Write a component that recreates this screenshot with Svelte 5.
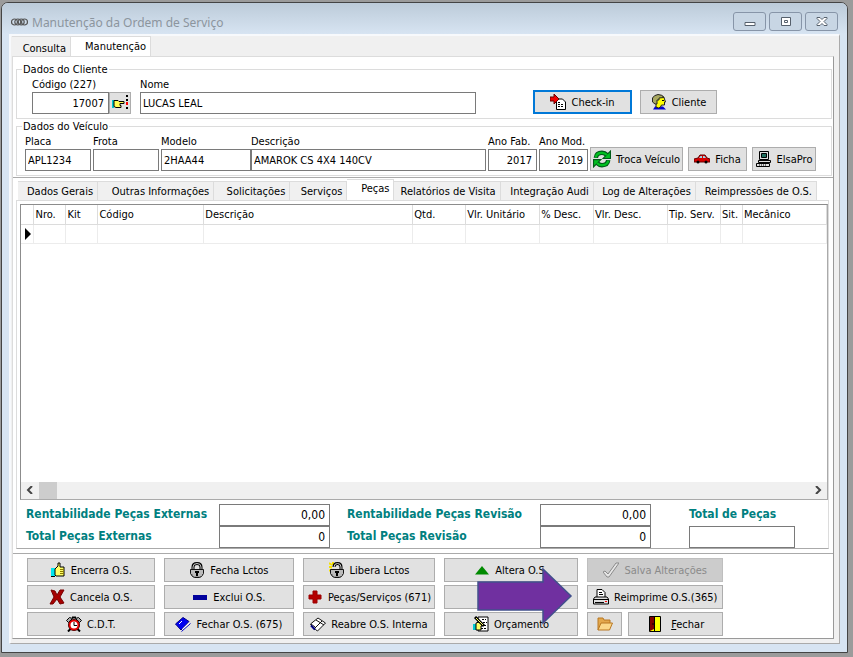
<script lang="ts">
	type Action = { label: string; icon: string; disabled?: boolean };

	const mainTabs = ["Consulta", "Manutenção"];
	const detailTabs = [
		{ label: "Dados Gerais", size: 80 },
		{ label: "Outras Informações", size: 116 },
		{ label: "Solicitações", size: 76 },
		{ label: "Serviços", size: 57 },
		{ label: "Peças", size: 47 },
		{ label: "Relatórios de Visita", size: 106 },
		{ label: "Integração Audi", size: 93 },
		{ label: "Log de Alterações", size: 102 },
		{ label: "Reimpressões de O.S.", size: 121 },
	];

	const columns = [
		{ label: "", size: 13 },
		{ label: "Nro.", size: 32 },
		{ label: "Kit", size: 32 },
		{ label: "Código", size: 106 },
		{ label: "Descrição", size: 209 },
		{ label: "Qtd.", size: 53 },
		{ label: "Vlr. Unitário", size: 74 },
		{ label: "% Desc.", size: 54 },
		{ label: "Vlr. Desc.", size: 74 },
		{ label: "Tip. Serv.", size: 53 },
		{ label: "Sit.", size: 22 },
		{ label: "Mecânico", size: 84 },
	];
	const columnsTotal = columns.reduce((sum, c) => sum + c.size, 0);

	const actions: Action[] = [
		{ label: "Encerra O.S.", icon: "thumb" },
		{ label: "Fecha Lctos", icon: "lock" },
		{ label: "Libera Lctos", icon: "unlock" },
		{ label: "Altera O.S.", icon: "triangle" },
		{ label: "Salva Alterações", icon: "check", disabled: true },
		{ label: "Cancela O.S.", icon: "cross" },
		{ label: "Exclui O.S.", icon: "minus" },
		{ label: "Peças/Serviços (671)", icon: "plus" },
		{ label: "", icon: "" },
		{ label: "Reimprime O.S.(365)", icon: "printer" },
		{ label: "C.D.T.", icon: "clock" },
		{ label: "Fechar O.S. (675)", icon: "book" },
		{ label: "Reabre O.S. Interna", icon: "openbook" },
		{ label: "Orçamento", icon: "notes" },
	];

	let mainTab = $state("Manutenção");
	let detailTab = $state("Peças");
	let codigo = $state("17007");
	let nome = $state("LUCAS LEAL");
	let placa = $state("APL1234");
	let frota = $state("");
	let modelo = $state("2HAA44");
	let descricao = $state("AMAROK CS 4X4 140CV");
	let anoFab = $state("2017");
	let anoMod = $state("2019");
</script>

{#snippet icon(name: string)}
	<svg class="icon" viewBox="0 0 16 16" aria-hidden="true">
		{#if name === "thumb"}
			<path d="M1 6h4v8H1z" fill="#00e5ee" />
			<path d="M5 7l3-3V1h2v4h4v9H6l-1-1z" fill="#ffff66" stroke="#000" />
			<path d="M10 7.500h4M10 9.500h4M10 11.500h4" stroke="#8a7a00" />
			<path d="M1 14.500h4" stroke="#000" />
		{:else if name === "lock" || name === "unlock"}
			{#if name === "unlock"}
				<path d="M0 1l3 2M4 0v3M0 5h3M0 9l3-2" stroke="#f5e100" stroke-width="2" />
				<path d="M5 5q0-3.500 3.500-3.500T12 5v2" fill="none" stroke="#000" stroke-width="3" />
				<path d="M5 5q0-3.500 3.500-3.500T12 5v2" fill="none" stroke="#ccc" />
			{:else}
				<path d="M4 8V5q0-3.500 4-3.500T12 5v3" fill="none" stroke="#000" stroke-width="3" />
				<path d="M4 8V5q0-3.500 4-3.500T12 5v3" fill="none" stroke="#ccc" />
			{/if}
			<path d="M1.500 7.500h13v4l-2 3-2 1h-5l-2-1-2-3z" fill="#999" stroke="#111" />
			<path d="M2 9h12M2 11h12M4 13h9" stroke="#ddd" />
			<path d="M6 9h4v2H9v3H7v-3H6z" fill="#000" />
		{:else if name === "triangle"}
			<path d="M1 12.500L8 4l7 8.500z" fill="#008a00" />
		{:else if name === "check"}
			<path d="M0 10l2-1 3 3 8-11h3L6 15H4z" fill="#e6e6e6" stroke="#8a8a8a" />
		{:else if name === "cross"}
			<path d="M2 1l4 1 2 4 3-5h4l-4 7 4 6-4 1-3-5-4 5H1l4-7z" fill="#a80000" stroke="#700" />
		{:else if name === "minus"}
			<path d="M1 6h14v5H1z" fill="#00009c" />
		{:else if name === "plus"}
			<path d="M6 2h4v4h4v4h-4v4H6v-4H2V6h4z" fill="#b40000" stroke="#900" />
		{:else if name === "printer"}
			<path d="M4 8V.500h5l3 3V8" fill="#fff" stroke="#000" />
			<path d="M6 3.500h3M6 5.500h4" stroke="#000" />
			<path d="M2 8h12l1.500 2v5H.500v-5z" fill="#ddd" stroke="#000" />
			<path d="M1 10.500h14M2 13.500h9" stroke="#000" />
			<path d="M12 12h2v1h-2z" fill="red" />
		{:else if name === "clock"}
			<path d="M.500 4.500l3-3 3 1-4 4zM15.500 4.500l-3-3-3 1 4 4z" fill="#aaa" stroke="#000" />
			<path d="M6 1.500h4M2 15.500l3-3M14 15.500l-3-3" stroke="#000" stroke-width="2" />
			<circle cx="8" cy="9" r="6" fill="#000" />
			<circle cx="8" cy="9" r="4.500" fill="#fff" stroke="#e00000" stroke-width="2" />
			<path d="M8 6v3.500h3" fill="none" stroke="#000" />
		{:else if name === "book"}
			<path d="M.500 8L8 1.500l6 4L6 14z" fill="#0000f0" stroke="#000080" />
			<path d="M7.500 12.500L14 6.500v2L7.500 15z" fill="#fff" />
			<path d="M6.500 15.500l9-8" stroke="#0000c0" />
			<path d="M4 8l3-3" stroke="#fff" />
		{:else if name === "openbook"}
			<path d="M.500 8L8 2l7.500 5-8 8-2-1.500H4z" fill="#fff" stroke="#111" />
			<path d="M4 13l8-8M1 8l4 3M6 4l8 5" fill="none" stroke="#111" />
			<path d="M1 9.500l4 4" stroke="#000080" stroke-width="2" />
		{:else if name === "notes"}
			<path d="M5 1h10v14H5z" fill="#fff" stroke="#000" />
			<path d="M9 3.500h4M10 6.500h4M8 9.500h6M8 12.500h6" stroke="#000" stroke-dasharray="2 1" />
			<path d="M0 8h3v6H0z" fill="#00c8d0" />
			<path d="M3 7l3-1 3 2v2H8v4H3z" fill="#ffff66" stroke="#000" />
			<path d="M2 1l9 9" stroke="#000" stroke-width="3" />
			<path d="M3 2l7 7" stroke="#ffff66" />
		{:else if name === "folder"}
			<path d="M1 14V2h5l1 2h6v3" fill="#e3a84c" stroke="#b87722" />
			<path d="M1 14l3-7h11.500l-3 7z" fill="#fbd88a" stroke="#b87722" />
		{:else if name === "door"}
			<path d="M2.500 .500h11v15h-11z" fill="#ffff00" stroke="#000" />
			<path d="M3 1h4v12l-4 2z" fill="#800000" />
			<path d="M7.500 1v14M5 8h2" stroke="#000" />
		{:else if name === "checkin"}
			<path d="M6.500 5h6l3 3v7.500h-9z" fill="#fff" stroke="#000" />
			<path d="M8 8.500h3M8 10.500h6M8 12.500h6" stroke="#000" stroke-dasharray="2 1" />
			<path d="M0 3h4V0l5 5-5 5V7H0z" fill="#f00000" stroke="#600" />
		{:else if name === "person"}
			<path d="M2 15.500l2-3h8l3 3z" fill="#0000d0" />
			<path d="M5 13V9Q4 7 6 3q7-3 7.500 2l1 3h-1v3h-3l-1 2-2 1z" fill="#ffff00" stroke="#222" />
			<path d="M4 10L1.500 8V4Q3 1 7 .500q4 0 6 3L8 4v2L6 6v4z" fill="#a8a860" stroke="#222" />
			<path d="M11 6.500h2" stroke="#000" />
		{:else if name === "refresh"}
			<path d="M2.500 7Q3 2.500 8 2.500q2.500 0 4.500 2" fill="none" stroke="#005a18" stroke-width="4" />
			<path d="M13.500 9Q13 13.500 8 13.500q-2.500 0-4.500-2" fill="none" stroke="#005a18" stroke-width="4" />
			<path d="M15.500 1v6.500H9zM.500 15V8.500H7z" fill="#00c020" stroke="#005a18" />
			<path d="M2.500 6.500Q3 2.500 8 2.500q2.500 0 4.500 2M13.500 9.500Q13 13.500 8 13.500q-2.500 0-4.500-2" fill="none" stroke="#00c020" stroke-width="2" />
		{:else if name === "car"}
			<path d="M0 8l4-1 2-3h5l2 3 3 1v3H0z" fill="#d80000" stroke="#600" />
			<path d="M5 7l1.500-2H8v2zM9 5h1.500L12 7H9z" fill="#9edbe8" />
			<circle cx="4" cy="11" r="1.500" /><circle cx="12" cy="11" r="1.500" />
		{:else if name === "computer"}
			<path d="M3.500 .500h9v8h-9z" fill="#ddd" stroke="#000" />
			<path d="M5.500 2.500h5v4h-5z" fill="#207060" stroke="#000" />
			<path d="M2.500 9.500h12v2h-12zM.500 12.500h13v3H.500z" fill="#ddd" stroke="#000" />
			<path d="M3 14h8" stroke="#000" stroke-dasharray="1 1" />
		{:else if name === "hand"}
			<path d="M0 5h2v8H0z" fill="#00c8d0" />
			<path d="M2 5.500h4l1 1h5v2H8v2h1v2H4l-2-1z" fill="#ffff55" stroke="#000" />
			<path d="M15 0v16" stroke="#000" stroke-width="2" stroke-dasharray="2 2" />
			<path d="M14 7h2v3h-2z" fill="red" />
		{/if}
	</svg>
{/snippet}

<div class="window">
	<header class="titlebar">
		<svg class="rings" viewBox="0 0 17 8" aria-hidden="true">
			<g fill="none" stroke="#555" stroke-width="1.200">
				<circle cx="3.500" cy="4" r="3" /><circle cx="6.800" cy="4" r="3" />
				<circle cx="10.200" cy="4" r="3" /><circle cx="13.500" cy="4" r="3" />
			</g>
		</svg>
		<h1>Manutenção da Ordem de Serviço</h1>
		<div class="controls">
			<button aria-label="Minimizar">
				<svg viewBox="0 0 12 10"><path d="M1 5.500h10v3H1z" fill="#fff" stroke="#56606c" /></svg>
			</button>
			<button aria-label="Maximizar">
				<svg viewBox="0 0 12 10">
					<path d="M1.500 .500h9v8h-9z" fill="#fff" stroke="#56606c" />
					<path d="M4.500 3.500h3v2h-3z" fill="#fff" stroke="#56606c" />
				</svg>
			</button>
			<button aria-label="Fechar janela">
				<svg viewBox="0 0 12 10">
					<path d="M1 .500h3l2 2 2-2h3v1L8 4.500l3 3v1H8l-2-2-2 2H1v-1l3-3-3-3z" fill="#fff" stroke="#56606c" />
				</svg>
			</button>
		</div>
	</header>

	<main class="client">
		<nav class="main-tabs">
			{#each mainTabs as tab}
				<button class="tab" class:active={tab === mainTab} onclick={() => (mainTab = tab)}>{tab}</button>
			{/each}
		</nav>

		<div class="page">
			<fieldset>
				<legend>Dados do Cliente</legend>
				<div class="fields customer">
					<label class="codigo">Código (227)<input class="num" bind:value={codigo} /></label>
					<button class="btn lookup" aria-label="Procurar cliente">{@render icon("hand")}</button>
					<label class="nome">Nome<input bind:value={nome} /></label>
					<button class="btn checkin">{@render icon("checkin")}Check-in</button>
					<button class="btn cliente">{@render icon("person")}Cliente</button>
				</div>
			</fieldset>

			<fieldset>
				<legend>Dados do Veículo</legend>
				<div class="fields vehicle">
					<label class="short">Placa<input bind:value={placa} /></label>
					<label class="short">Frota<input bind:value={frota} /></label>
					<div class="joined">
						<label class="modelo">Modelo<input bind:value={modelo} /></label>
						<label class="descricao">Descrição<input bind:value={descricao} /></label>
					</div>
					<label class="ano">Ano Fab.<input class="num" bind:value={anoFab} /></label>
					<label class="ano">Ano Mod.<input class="num" bind:value={anoMod} /></label>
					<button class="btn troca">{@render icon("refresh")}Troca Veículo</button>
					<button class="btn ficha">{@render icon("car")}Ficha</button>
					<button class="btn elsa">{@render icon("computer")}ElsaPro</button>
				</div>
			</fieldset>

			<section class="detail">
				<nav class="detail-tabs" style:grid-template-columns={detailTabs.map((t) => `${t.size}fr`).join(" ")}>
					{#each detailTabs as tab}
						<button class="tab" class:active={tab.label === detailTab} onclick={() => (detailTab = tab.label)}>
							{tab.label}
						</button>
					{/each}
				</nav>

				<div class="sheet">
					<div class="grid">
						<table>
							<colgroup>
								{#each columns as column}
									<col style:width="{(column.size / columnsTotal) * 100}%" />
								{/each}
							</colgroup>
							<thead>
								<tr>
									{#each columns as column}
										<th>{column.label}</th>
									{/each}
								</tr>
							</thead>
							<tbody>
								<tr>
									{#each columns as _, i}
										<td>
											{#if i === 0}
												<svg class="marker" viewBox="0 0 6 12"><path d="M0 0l6 6-6 6z" /></svg>
											{/if}
										</td>
									{/each}
								</tr>
							</tbody>
						</table>
						<div class="scrollbar">
							<button aria-label="Rolar para a esquerda">
								<svg viewBox="0 0 8 8"><path d="M6 0L2 4l4 4" /></svg>
							</button>
							<div class="thumb"></div>
							<button aria-label="Rolar para a direita">
								<svg viewBox="0 0 8 8"><path d="M2 0l4 4-4 4" /></svg>
							</button>
						</div>
					</div>

					<div class="totals">
						<div class="pairs">
							<label for="rent-ext">Rentabilidade Peças Externas</label>
							<input id="rent-ext" class="num" value="0,00" readonly />
							<label for="total-ext">Total Peças Externas</label>
							<input id="total-ext" class="num" value="0" readonly />
						</div>
						<div class="pairs">
							<label for="rent-rev">Rentabilidade Peças Revisão</label>
							<input id="rent-rev" class="num" value="0,00" readonly />
							<label for="total-rev">Total Peças Revisão</label>
							<input id="total-rev" class="num" value="0" readonly />
						</div>
						<div class="grand">
							<label for="total">Total de Peças</label>
							<input id="total" class="num" readonly />
						</div>
					</div>
				</div>
			</section>

			<footer class="actions">
				{#each actions as action}
					{#if action.label}
						<button class="btn" disabled={action.disabled}>{@render icon(action.icon)}{action.label}</button>
					{:else}
						<div class="callout">
							<button class="btn" aria-label="Imprime O.S."></button>
							<svg class="arrow" viewBox="0 0 96 58" aria-hidden="true">
								<path d="M1 15h65V2l28 27-28 27V43H1z" fill="#7030a0" stroke="#41508c" stroke-width="1.500" />
							</svg>
						</div>
					{/if}
				{/each}
				<div class="last">
					<button class="btn folder" aria-label="Abrir pasta">{@render icon("folder")}</button>
					<button class="btn close">{@render icon("door")}<span><u>F</u>echar</span></button>
				</div>
			</footer>
		</div>
	</main>
</div>

<style>
	:global(body) {
		display: flow-root;
		background: #9b9b9b;
	}

	.window {
		box-sizing: border-box;
		min-height: calc(100vh - 6px);
		margin: 2px 5px 4px 1px;
		border: 1px solid #444;
		border-radius: 7px 7px 0 0;
		background: #d7e4f2;
		padding: 0 7px 8px;
		display: flex;
		flex-direction: column;
		font: 11px/15px "DejaVu Sans Condensed", "Noto Sans", sans-serif;
		color: #000;
	}

	button,
	input {
		box-sizing: border-box;
		font: inherit;
		color: inherit;
		margin: 0;
	}

	.titlebar {
		height: 31px;
		margin: 0 -7px;
		padding: 0 9px;
		display: flex;
		align-items: center;
		background: linear-gradient(#bccbd9, #d7e4f2);
		border-radius: 6px 6px 0 0;
	}

	.rings {
		width: 17px;
		height: 8px;
		margin: 6px 4px 0 0;
	}

	h1 {
		margin: 8px 0 0;
		font: 12px/18px "Noto Sans", sans-serif;
		color: #8c959e;
		flex: 1;
	}

	.controls {
		display: flex;
		gap: 3px;
		margin-top: 6px;
	}

	.controls button {
		width: 33px;
		height: 19px;
		padding: 0;
		display: grid;
		place-items: center;
		background: #c8d6e4;
		border: 1px solid #8795a8;
		border-radius: 3px;
	}

	.controls svg {
		width: 12px;
		height: 10px;
	}

	.client {
		flex: 1;
		display: flex;
		flex-direction: column;
		background: #f0f0f0;
		border: 2px solid #f7f9fc;
		border-right: 1px solid #aaa;
		border-bottom: 1px solid #aaa;
		padding: 0 5px 4px 1px;
	}

	.main-tabs {
		display: flex;
	}

	.tab {
		padding: 0 4px 0 0;
		height: 19px;
		background: #f0f0f0;
		border: 1px solid #dcdcdc;
		border-bottom: 0;
		border-left: 0;
		text-align: right;
		white-space: nowrap;
	}

	.tab.active {
		background: #fff;
	}

	.main-tabs .tab {
		width: 59px;
		height: 20px;
		padding-top: 3px;
	}

	.main-tabs .active {
		width: 80px;
		padding: 0 4px 1px 0;
	}

	.page {
		flex: 1;
		display: flex;
		flex-direction: column;
		background: #fff;
		border: 1px solid #dcdcdc;
		border-right-color: #999;
		border-bottom-color: #999;
		padding-top: 5px;
	}

	fieldset {
		margin: 0 1px 0 3px;
		padding: 0 8px 4px;
		border: 1px solid #dcdcdc;
		min-width: 0;
	}

	legend {
		margin-left: -3px;
		padding: 0 1px;
		line-height: 15px;
	}

	.fields {
		display: flex;
		align-items: flex-end;
	}

	.fields label {
		display: block;
		white-space: nowrap;
	}

	input {
		display: block;
		width: 100%;
		height: 22px;
		padding: 0 4px 0 2px;
		background: #fff;
		border: 1px solid #7a7a7a;
		border-radius: 0;
		outline: 0;
	}

	.num {
		text-align: right;
	}

	.btn {
		height: 24px;
		padding: 0 2px;
		display: flex;
		align-items: center;
		justify-content: center;
		gap: 5px;
		background: #e1e1e1;
		border: 1px solid #adadad;
		white-space: nowrap;
	}

	.btn:disabled {
		background: #ccc;
		border-color: #bfbfbf;
		color: #8a8a8a;
	}

	.icon {
		width: 16px;
		height: 16px;
		flex: none;
	}

	.customer {
		padding-left: 7px;
	}

	.codigo {
		width: 77px;
	}

	.lookup {
		width: 22px;
		height: 22px;
		margin-right: 9px;
	}

	.nome {
		flex: 1;
	}

	.checkin {
		width: 99px;
		margin: 0 8px 0 57px;
		border: 2px solid #0078d7;
	}

	.cliente {
		width: 77px;
		margin-right: 106px;
	}

	.vehicle {
		gap: 2px;
	}

	.short {
		width: 66px;
	}

	.joined {
		flex: 1;
		display: flex;
	}

	.modelo {
		width: 90px;
	}

	.descricao {
		flex: 1;
	}

	.ano {
		width: 49px;
	}

	.troca {
		width: 93px;
		margin-right: 3px;
	}

	.troca .icon {
		width: 18px;
		height: 18px;
	}

	.ficha {
		width: 59px;
		margin-right: 3px;
	}

	.elsa {
		width: 64px;
		margin-right: 7px;
	}

	.detail {
		flex: 1;
		display: flex;
		flex-direction: column;
		margin-top: 1px;
		border-top: 1px solid #aaa;
		border-bottom: 1px solid #aaa;
		padding: 1px 4px 4px 3px;
	}

	.detail-tabs {
		display: grid;
		align-items: end;
		padding: 0 12px 0 2px;
	}

	.detail-tabs .active {
		height: 21px;
		padding-bottom: 4px;
	}

	.sheet {
		flex: 1;
		display: flex;
		flex-direction: column;
		border: 1px solid #dcdcdc;
		border-bottom-color: #aaa;
		padding: 3px 0 0 3px;
	}

	.grid {
		flex: 1;
		display: flex;
		flex-direction: column;
		border: 1px solid #8c8c8c;
		border-right-color: #aaa;
		border-bottom-color: #aaa;
	}

	table {
		width: 100%;
		table-layout: fixed;
		border-collapse: collapse;
	}

	th,
	td {
		box-sizing: border-box;
		height: 19px;
		padding: 0 0 0 1px;
		font-weight: normal;
		text-align: left;
		white-space: nowrap;
		border-right: 1px solid #ececec;
		border-bottom: 1px solid #ececec;
	}

	th {
		border-color: #dcdcdc;
	}

	.marker {
		display: block;
		width: 6px;
		height: 12px;
		margin-left: 3px;
	}

	.scrollbar {
		margin-top: auto;
		display: flex;
		height: 17px;
		background: #f0f0f0;
	}

	.scrollbar button {
		width: 18px;
		padding: 0;
		border: 0;
		background: none;
	}

	.scrollbar svg {
		width: 8px;
		height: 8px;
		fill: none;
		stroke: #444;
		stroke-width: 2;
	}

	.thumb {
		width: 18px;
		margin-right: auto;
		background: #cdcdcd;
	}

	.totals {
		display: flex;
		padding: 4px 0 0 6px;
		color: #008080;
		font-weight: bold;
		font-size: 12px;
		line-height: 20px;
	}

	.totals label {
		white-space: nowrap;
	}

	.totals input {
		color: #000;
		font-weight: normal;
	}

	.pairs {
		display: grid;
		grid-template-columns: 193px 111px;
		grid-template-rows: 22px 22px;
		margin-right: 17px;
	}

	.grand {
		margin-left: 21px;
		width: 106px;
	}

	.grand label {
		display: block;
		height: 22px;
	}

	.actions {
		display: grid;
		grid-template-columns: 128fr 131fr 132fr 135fr 136fr;
		gap: 3px 9px;
		margin-top: 4px;
		padding: 0 110px 2px 14px;
	}

	.callout {
		position: relative;
		display: grid;
	}

	.arrow {
		position: absolute;
		left: 33px;
		top: -18px;
		width: 96px;
		height: 58px;
	}

	.last {
		display: flex;
		gap: 6px;
	}

	.folder {
		width: 35px;
	}

	.close {
		flex: 1;
		gap: 8px;
	}
</style>
